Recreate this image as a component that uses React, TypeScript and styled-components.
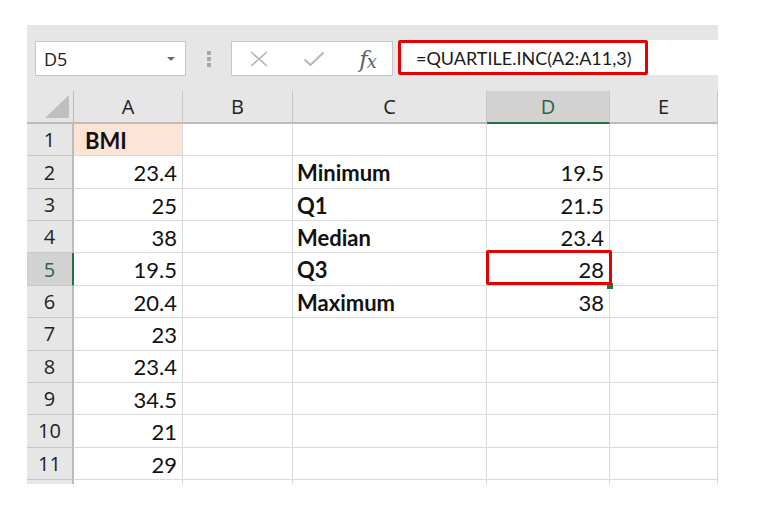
import React from "react";
import styled, { createGlobalStyle } from "styled-components";

const GlobalStyle = createGlobalStyle`
  body {
    margin: 0;
    background: #ffffff;
  }
`;

const colors = {
  chrome: "#e6e6e6",
  chromeLine: "#c6c6c6",
  grid: "#d9d9d9",
  headerActive: "#d2d2d2",
  green: "#217346",
  red: "#e30000",
  peach: "#fce4d6",
};

const columns = ["A", "B", "C", "D", "E"];
const columnWidths = "47px 109px 110px 194px 123px 108px";

type Row = { a?: string; c?: string; d?: string };

const rows: Row[] = [
  { a: "BMI" },
  { a: "23.4", c: "Minimum", d: "19.5" },
  { a: "25", c: "Q1", d: "21.5" },
  { a: "38", c: "Median", d: "23.4" },
  { a: "19.5", c: "Q3", d: "28" },
  { a: "20.4", c: "Maximum", d: "38" },
  { a: "23" },
  { a: "23.4" },
  { a: "34.5" },
  { a: "21" },
  { a: "29" },
];

const ACTIVE_ROW = 5;
const ACTIVE_COL = "D";

export default function App() {
  return (
    <>
      <GlobalStyle />
      <Page>
        <Window>
          <Toolbar>
            <NameBox>
              <NameText>D5</NameText>
              <DropArrow />
            </NameBox>
            <Grip>
              <i />
              <i />
              <i />
            </Grip>
            <FxButtons>
              <svg width="20" height="16" viewBox="0 0 20 16">
                <path d="M2 1 L18 15 M18 1 L2 15" stroke="#b5b5b5" strokeWidth="1.6" fill="none" />
              </svg>
              <svg width="22" height="16" viewBox="0 0 22 16">
                <path d="M1.5 8.5 L7.5 14 L20.5 1.5" stroke="#b5b5b5" strokeWidth="2" fill="none" />
              </svg>
              <FxLabel>
                f<sub>x</sub>
              </FxLabel>
            </FxButtons>
            <FormulaBar>
              <FormulaMark>=QUARTILE.INC(A2:A11,3)</FormulaMark>
            </FormulaBar>
          </Toolbar>

          <Sheet>
            <Corner>
              <svg width="24" height="23" viewBox="0 0 24 23">
                <polygon points="24,0 24,23 0,23" fill="#bfbfbf" />
              </svg>
            </Corner>
            {columns.map((c) => (
              <ColHeader key={c} $active={c === ACTIVE_COL}>
                {c}
              </ColHeader>
            ))}

            {rows.map((r, i) => {
              const n = i + 1;
              const active = n === ACTIVE_ROW;
              return (
                <React.Fragment key={n}>
                  <RowHeader $active={active}>{n}</RowHeader>
                  <Cell
                    $align={n === 1 ? "left" : "right"}
                    $bold={n === 1}
                    $fill={n === 1 ? colors.peach : undefined}
                    $indent={n === 1 ? 11 : 4}
                  >
                    {r.a}
                  </Cell>
                  <Cell />
                  <Cell $bold>{r.c}</Cell>
                  <Cell $align="right">
                    {r.d}
                    {active && (
                      <>
                        <FillHandle />
                        <Callout />
                      </>
                    )}
                  </Cell>
                  <Cell />
                </React.Fragment>
              );
            })}

            {/* next row, only its top few pixels are in view */}
            <RowHeader />
            {columns.map((c) => (
              <Cell key={c} />
            ))}
          </Sheet>
        </Window>
      </Page>
    </>
  );
}

const Page = styled.div`
  padding: 25px 0 0 27px;
`;

const Window = styled.div`
  width: 691px;
  height: 459px;
  overflow: hidden;
  background: #ffffff;
`;

const Toolbar = styled.div`
  display: flex;
  align-items: flex-start;
  height: 66px;
  box-sizing: border-box;
  padding: 16px 0 0 8px;
  background: ${colors.chrome};
`;

const NameBox = styled.div`
  display: flex;
  align-items: center;
  justify-content: space-between;
  width: 151px;
  height: 35px;
  box-sizing: border-box;
  padding: 0 10px 0 8px;
  background: #ffffff;
  border: 1px solid ${colors.chromeLine};
`;

const NameText = styled.span`
  font-family: "Open Sans", "Noto Sans", sans-serif;
  font-size: 18px;
  color: #222;
`;

const DropArrow = styled.span`
  width: 0;
  height: 0;
  border-left: 4px solid transparent;
  border-right: 4px solid transparent;
  border-top: 4px solid #6a6a6a;
`;

const Grip = styled.div`
  display: flex;
  flex-direction: column;
  justify-content: center;
  gap: 2px;
  width: 45px;
  height: 35px;
  align-items: center;

  i {
    display: block;
    width: 4px;
    height: 4px;
    background: #a8a8a8;
  }
`;

const FxButtons = styled.div`
  display: flex;
  align-items: center;
  justify-content: space-between;
  width: 162px;
  height: 35px;
  box-sizing: border-box;
  padding: 0 16px 0 17px;
  background: #ffffff;
  border: 1px solid ${colors.chromeLine};
`;

const FxLabel = styled.span`
  font-family: "DejaVu Serif", "Liberation Serif", serif;
  font-style: italic;
  font-size: 23px;
  color: #5f5f5f;
  letter-spacing: -1px;

  sub {
    font-size: 18px;
    vertical-align: -1px;
  }
`;

const FormulaBar = styled.div`
  flex: 1;
  display: flex;
  height: 35px;
  margin: -1px 0 0 5px;
  background: #ffffff;
`;

const FormulaMark = styled.span`
  display: flex;
  align-items: center;
  width: 250px;
  box-sizing: border-box;
  padding-left: 15px;
  border: 3px solid ${colors.red};
  border-radius: 2px;
  font-family: Lato, "Noto Sans", sans-serif;
  font-size: 18px;
  color: #1a1a1a;
  white-space: nowrap;
`;

const Sheet = styled.div`
  display: grid;
  grid-template-columns: ${columnWidths};
  grid-template-rows: 33px;
  grid-auto-rows: 32.36px;
  background: ${colors.chrome};
`;

const headerFont = `
  font-family: "Open Sans", "Noto Sans", sans-serif;
  font-size: 20px;
`;

const Corner = styled.div`
  display: flex;
  align-items: flex-end;
  justify-content: flex-end;
  padding: 0 4px 4px 0;
  background: ${colors.chrome};
  border-right: 1px solid #bcbcbc;
  border-bottom: 2px solid #bcbcbc;
`;

const ColHeader = styled.div<{ $active?: boolean }>`
  display: flex;
  align-items: center;
  justify-content: center;
  box-sizing: border-box;
  ${headerFont}
  color: ${(p) => (p.$active ? "#2f6447" : "#222")};
  background: ${(p) => (p.$active ? colors.headerActive : colors.chrome)};
  border-right: 1px solid ${colors.chromeLine};
  border-bottom: 2px solid ${(p) => (p.$active ? colors.green : "#bcbcbc")};
`;

const RowHeader = styled.div<{ $active?: boolean }>`
  display: flex;
  align-items: center;
  justify-content: center;
  box-sizing: border-box;
  ${headerFont}
  color: ${(p) => (p.$active ? "#2f6447" : "#222")};
  background: ${(p) => (p.$active ? colors.headerActive : colors.chrome)};
  border-bottom: 1px solid ${colors.chromeLine};
  border-right: 2px solid ${(p) => (p.$active ? colors.green : "#bcbcbc")};
`;

const Cell = styled.div<{
  $align?: "left" | "right";
  $bold?: boolean;
  $fill?: string;
  $indent?: number;
}>`
  position: relative;
  display: flex;
  align-items: flex-end;
  justify-content: ${(p) => (p.$align === "right" ? "flex-end" : "flex-start")};
  box-sizing: border-box;
  padding: 0 5px 1px ${(p) => p.$indent ?? 4}px;
  background: ${(p) => p.$fill ?? "#ffffff"};
  border-right: 1px solid ${colors.grid};
  border-bottom: 1px solid ${colors.grid};
  font-family: Lato, "Noto Sans", sans-serif;
  font-size: 22px;
  line-height: 1.2;
  font-weight: ${(p) => (p.$bold ? 700 : 400)};
  color: #111;
  white-space: nowrap;
`;

const FillHandle = styled.span`
  position: absolute;
  z-index: 2;
  right: -4px;
  bottom: -4px;
  width: 6px;
  height: 6px;
  background: ${colors.green};
`;

const Callout = styled.span`
  position: absolute;
  z-index: 3;
  top: -3px;
  left: -1px;
  right: -3px;
  bottom: 0;
  border: 3px solid ${colors.red};
  border-radius: 2px;
  pointer-events: none;
`;
